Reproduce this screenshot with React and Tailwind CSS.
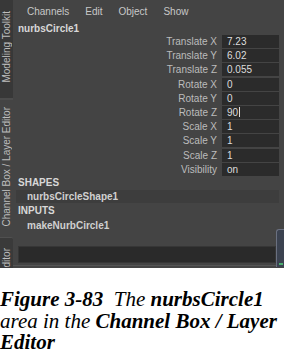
import React from 'react';

const attrs = [
    { label: 'Translate X', value: '7.23' },
    { label: 'Translate Y', value: '6.02' },
    { label: 'Translate Z', value: '0.055' },
    { label: 'Rotate X', value: '0' },
    { label: 'Rotate Y', value: '0' },
    { label: 'Rotate Z', value: '90', editing: true },
    { label: 'Scale X', value: '1' },
    { label: 'Scale Y', value: '1' },
    { label: 'Scale Z', value: '1' },
    { label: 'Visibility', value: 'on' },
];

const menus = ['Channels', 'Edit', 'Object', 'Show'];

function SideTab({ label, className }) {
    return (
        <div className={`flex justify-center overflow-hidden ${className}`}>
            <span className="[writing-mode:vertical-rl] rotate-180 whitespace-nowrap text-[10px] leading-[13px] text-[#bdbdbd]">
                {label}
            </span>
        </div>
    );
}

export default function App() {
    return (
        <div className="w-[284px] h-[358px] bg-white overflow-hidden font-['Liberation_Sans',Arial,sans-serif]">
            {/* Maya panel */}
            <div className="h-[268px] flex bg-[#444444]">
                {/* Vertical tabs */}
                <div className="w-[13px] flex flex-col">
                    <SideTab label="Modeling Toolkit" className="h-[98px] bg-[#383838] items-start pt-[11px]" />
                    <div className="h-[2px] bg-[#4c4c4c]" />
                    <SideTab label="Channel Box / Layer Editor" className="flex-1 items-end pb-[10px]" />
                    <SideTab label="Attribute Editor" className="h-[31px] bg-[#3a3a3a] border-t border-[#505050] items-start pt-[10px] rounded-tr-[2px]" />
                </div>

                {/* Channel box */}
                <div className="flex-1 flex flex-col relative">
                    <div className="h-[22px] flex items-center pl-[14px] gap-[16px] text-[10px] text-[#c8c8c8]">
                        {menus.map((m) => (
                            <span key={m}>{m}</span>
                        ))}
                    </div>

                    <div className="h-[13px] flex items-center pl-[5px] text-[10px] font-bold text-[#d8d8d8]">
                        nurbsCircle1
                    </div>

                    <div className="flex flex-col gap-[1.2px] pr-[5px]">
                        {attrs.map((a) => (
                            <div key={a.label} className="h-[13px] flex items-center">
                                <span className="flex-1 text-right pr-[5px] text-[10px] text-[#bcbcbc]">{a.label}</span>
                                <div className="w-[57px] h-full bg-[#2b2b2b] flex items-center pl-[5px] text-[10px] text-[#dddddd]">
                                    {a.value}
                                    {a.editing && <span className="w-px h-[10px] bg-[#dddddd] ml-px" />}
                                </div>
                            </div>
                        ))}
                    </div>

                    <div className="h-[14px] flex items-center pl-[5px] text-[10px] font-bold text-[#d8d8d8]">
                        SHAPES
                    </div>
                    <div className="ml-[3px] mr-[5px] h-[13px] bg-[#3d3d3d] flex items-center pl-[11px] text-[10px] font-bold text-[#d0d0d0]">
                        nurbsCircleShape1
                    </div>
                    <div className="h-[16px] flex items-center pl-[5px] text-[10px] font-bold text-[#d8d8d8]">
                        INPUTS
                    </div>
                    <div className="h-[13px] flex items-center pl-[14px] text-[10px] font-bold text-[#d0d0d0]">
                        makeNurbCircle1
                    </div>

                    <div className="mt-[14px] ml-[5px] mr-[8px] h-[17px] bg-[#2a2a2a] border border-[#363636]" />
                    <div className="mt-[2px] h-px bg-[#555555]" />

                    {/* window edge widget */}
                    <div className="absolute right-0 top-[229px] w-[8px] h-[38px] bg-[#3b4250] border-l border-t border-[#6a7080] rounded-tl-[3px] flex flex-col justify-end items-center pb-[2px]">
                        <div className="w-[4px] h-[2px] bg-[#4caf70]" />
                    </div>
                </div>
            </div>

            {/* Caption */}
            <div className="pt-[21px] font-['Liberation_Serif','Times_New_Roman',serif] italic text-[21px] leading-[21.5px] text-black whitespace-nowrap">
                <div><b>Figure 3-83</b>&nbsp; The <b>nurbsCircle1</b></div>
                <div>area in the <b>Channel Box / Layer</b></div>
                <div><b>Editor</b></div>
            </div>
        </div>
    );
}
